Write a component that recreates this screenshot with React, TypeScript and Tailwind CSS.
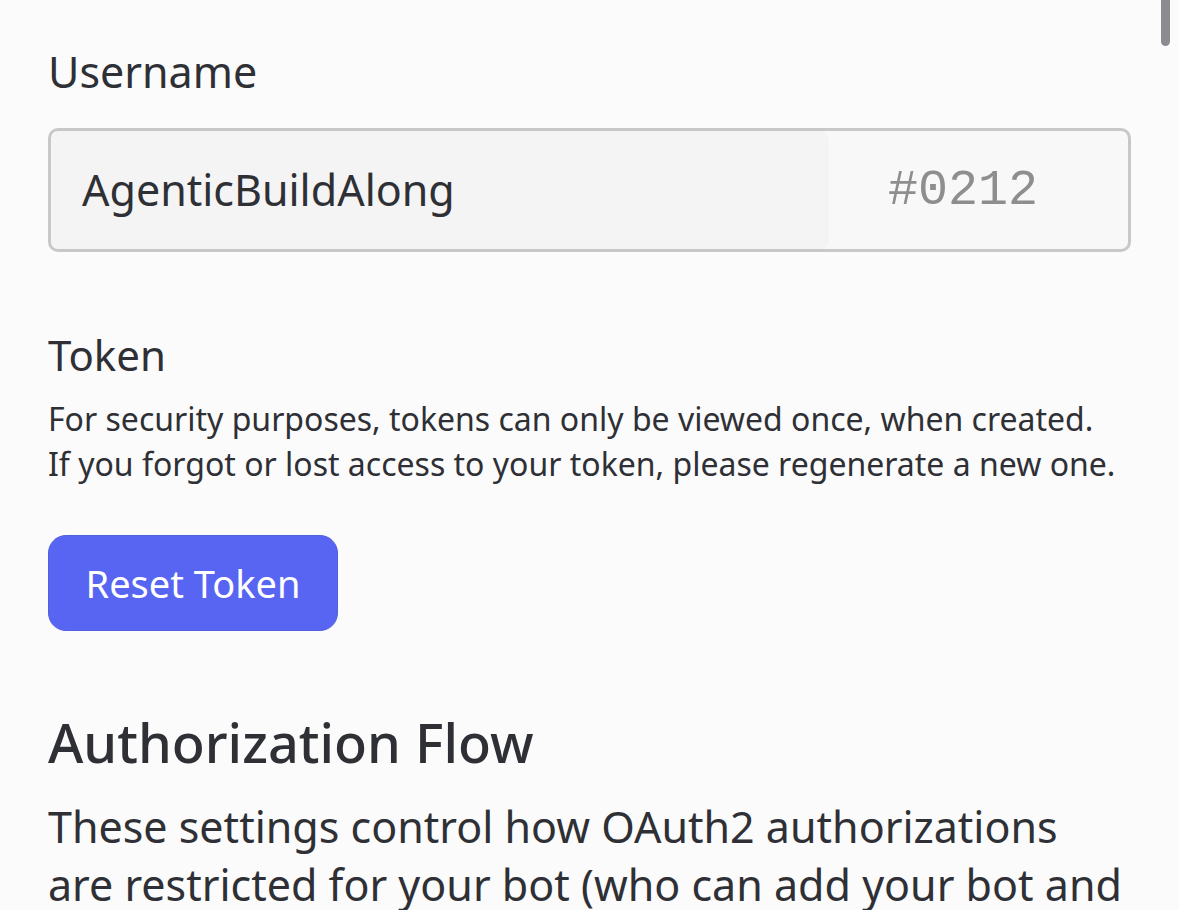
import React from "react";

export default function App() {
  return (
    <div
      className="relative w-[1179px] h-[910px] overflow-hidden bg-[#fbfbfb] text-[#2e3035]"
      style={{ fontFamily: '"Noto Sans", "Open Sans", sans-serif' }}
    >
      <div className="absolute right-[9px] top-0 w-[9px] h-[46px] rounded-b-full bg-[#8c8c90]" />
      <div className="flex flex-col px-[48px] pt-[40px]">
        <div className="text-[43px] leading-[64px] font-normal">Username</div>
        <div className="mt-[24px] flex h-[124px] rounded-[10px] border-[3px] border-[#c8c8c8] bg-[#f8f8f8]">
          <div className="flex w-[776px] items-center rounded-[10px] bg-[#f4f4f4] pl-[31px] text-[43px] shadow-[1px_0_2px_rgba(0,0,0,0.04)]">
            AgenticBuildAlong
          </div>
          <div
            className="flex flex-1 items-center justify-end pr-[90px] text-[50px] text-[#8e8e8e]"
            style={{ fontFamily: '"Liberation Mono", monospace' }}
          >
            #0212
          </div>
        </div>
        <div className="mt-[74px] text-[42px] leading-[58px]">Token</div>
        <div className="mt-[12px] whitespace-nowrap text-[32px] leading-[45px]">
          For security purposes, tokens can only be viewed once, when created.
          <br />
          If you forgot or lost access to your token, please regenerate a new one.
        </div>
        <div className="mt-[49px] flex">
          <button className="flex h-[96px] w-[290px] items-center justify-center rounded-[18px] border border-[#5260e0] bg-[#5865f2] text-[38px] text-white">
            Reset Token
          </button>
        </div>
        <div className="mt-[75px] text-[54px] leading-[72px] font-medium">Authorization Flow</div>
        <div className="mt-[20px] whitespace-nowrap text-[43px] leading-[58px]">
          These settings control how OAuth2 authorizations
          <br />
          are restricted for your bot (who can add your bot and
          <br />
          where it can be added).
        </div>
      </div>
    </div>
  );
}
